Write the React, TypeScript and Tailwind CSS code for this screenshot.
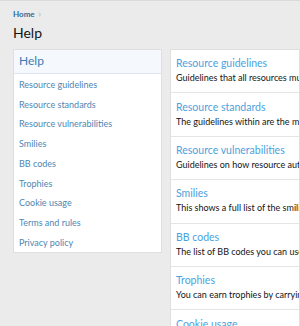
import React from "react";

const nav = [
  "Resource guidelines",
  "Resource standards",
  "Resource vulnerabilities",
  "Smilies",
  "BB codes",
  "Trophies",
  "Cookie usage",
  "Terms and rules",
  "Privacy policy",
];

const pages = [
  ["Resource guidelines", "Guidelines that all resources must follow."],
  ["Resource standards", "The guidelines within are the minimum standards."],
  ["Resource vulnerabilities", "Guidelines on how resource authors handle vulnerabilities."],
  ["Smilies", "This shows a full list of the smilies you can use."],
  ["BB codes", "The list of BB codes you can use to spice up your messages."],
  ["Trophies", "You can earn trophies by carrying out different actions."],
  ["Cookie usage", "This page explains how this site uses cookies."],
];

export default function App() {
  return (
    <div
      className="w-[300px] h-[326px] overflow-hidden bg-[#ebebeb] border-t border-[#dadada]"
      style={{ fontFamily: 'Lato, "Open Sans", sans-serif' }}
    >
      <div className="pl-[13px] pt-[7.6px]">
        <div className="flex items-center gap-[4px] h-[10px] leading-[10px]">
          <span className="text-[8px] font-bold text-[#2b6ba0]">Home</span>
          <span className="text-[9px] text-[#a0aab4]">›</span>
        </div>
        <h1 className="text-[14px] leading-[20px] text-[#141414] mt-[4.3px]">Help</h1>
      </div>
      <div className="flex items-start gap-[8px] pl-[13px] mt-[6.1px]">
        <div className="w-[149px] shrink-0 bg-white border border-[#dfdfdf]">
          <div className="h-[24px] bg-[#f5f9fd] border-b border-[#dde6ef] pl-[5px] text-[12px] leading-[22px] text-[#3b7db4]">
            Help
          </div>
          <div>
            {nav.map((n) => (
              <div
                key={n}
                className="pl-[5px] h-[19.75px] leading-[22px] text-[9px] text-[#4f86b3] whitespace-nowrap"
              >
                {n}
              </div>
            ))}
          </div>
        </div>
        <div className="flex-1 min-w-0 bg-white border border-[#dfdfdf]">
          {pages.map(([t, d]) => (
            <div
              key={t}
              className="h-[43.4px] border-b border-[#e5e5e5] pl-[5px] pt-[6.2px] whitespace-nowrap overflow-hidden"
            >
              <div className="text-[10.5px] leading-[14px] text-[#4aa2de]">{t}</div>
              <div className="text-[9px] leading-[15px] text-[#141414]">{d}</div>
            </div>
          ))}
        </div>
      </div>
    </div>
  );
}
